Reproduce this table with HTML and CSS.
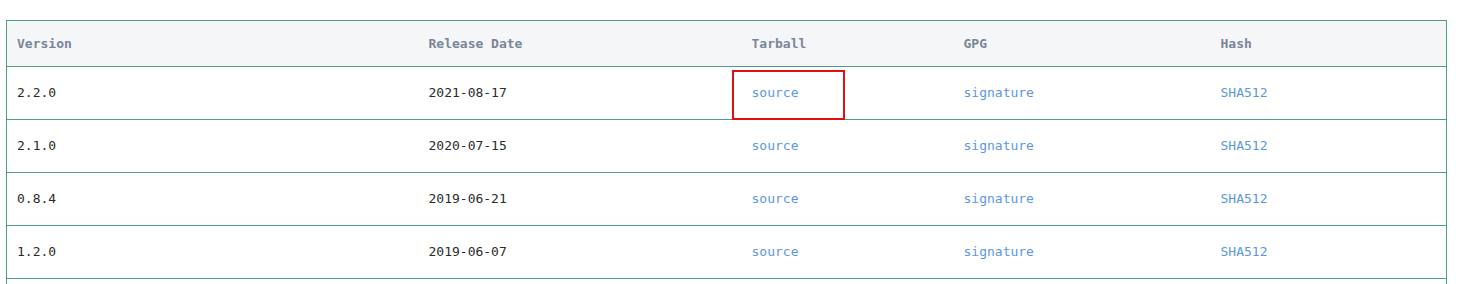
FILE: index.html
```html
<!DOCTYPE html>
<html>
<head>
<meta charset="utf-8">
<link rel="stylesheet" href="styles.css">
</head>
<body>
<div class="wrap">
  <table class="releases">
    <colgroup>
      <col class="c1"><col class="c2"><col class="c3"><col class="c4"><col class="c5">
    </colgroup>
    <thead>
      <tr><th>Version</th><th>Release Date</th><th>Tarball</th><th>GPG</th><th>Hash</th></tr>
    </thead>
    <tbody>
      <tr><td>2.2.0</td><td>2021-08-17</td><td class="hl"><a href="#">source</a><span class="mark"></span></td><td><a href="#">signature</a></td><td><a href="#">SHA512</a></td></tr>
      <tr><td>2.1.0</td><td>2020-07-15</td><td><a href="#">source</a></td><td><a href="#">signature</a></td><td><a href="#">SHA512</a></td></tr>
      <tr><td>0.8.4</td><td>2019-06-21</td><td><a href="#">source</a></td><td><a href="#">signature</a></td><td><a href="#">SHA512</a></td></tr>
      <tr><td>1.2.0</td><td>2019-06-07</td><td><a href="#">source</a></td><td><a href="#">signature</a></td><td><a href="#">SHA512</a></td></tr>
      <tr><td>&nbsp;</td><td></td><td></td><td></td><td></td></tr>
    </tbody>
  </table>
</div>
</body>
</html>
```

FILE: styles.css
```css
html, body {
  margin: 0;
  padding: 0;
  background: #ffffff;
}
.wrap {
  padding: 20px 21px 0 6px;
}
.releases {
  width: 1441px;
  border-collapse: collapse;
  table-layout: fixed;
  font-family: "DejaVu Sans Mono", "Liberation Mono", monospace;
  font-size: 13px;
  border: 1px solid #4f9d86;
}
.c1 { width: 412px; }
.c2 { width: 323px; }
.c3 { width: 212px; }
.c4 { width: 257px; }
.c5 { width: auto; }
.releases th {
  background: #f5f6f7;
  color: #7a8599;
  font-weight: bold;
  text-align: left;
  height: 44px;
  padding: 0 10px 1px;
  border-bottom: 1px solid #4f9d86;
}
.releases td {
  height: 51px;
  padding: 0 10px 1px;
  color: #2b2b2b;
  border-bottom: 1px solid #4f9d86;
}
.releases a {
  color: #5b97e0;
  text-decoration: none;
}
.hl {
  position: relative;
}
.mark {
  position: absolute;
  left: -10px;
  top: 3px;
  width: 109px;
  height: 46px;
  border: 2px solid #e01010;
}
```
